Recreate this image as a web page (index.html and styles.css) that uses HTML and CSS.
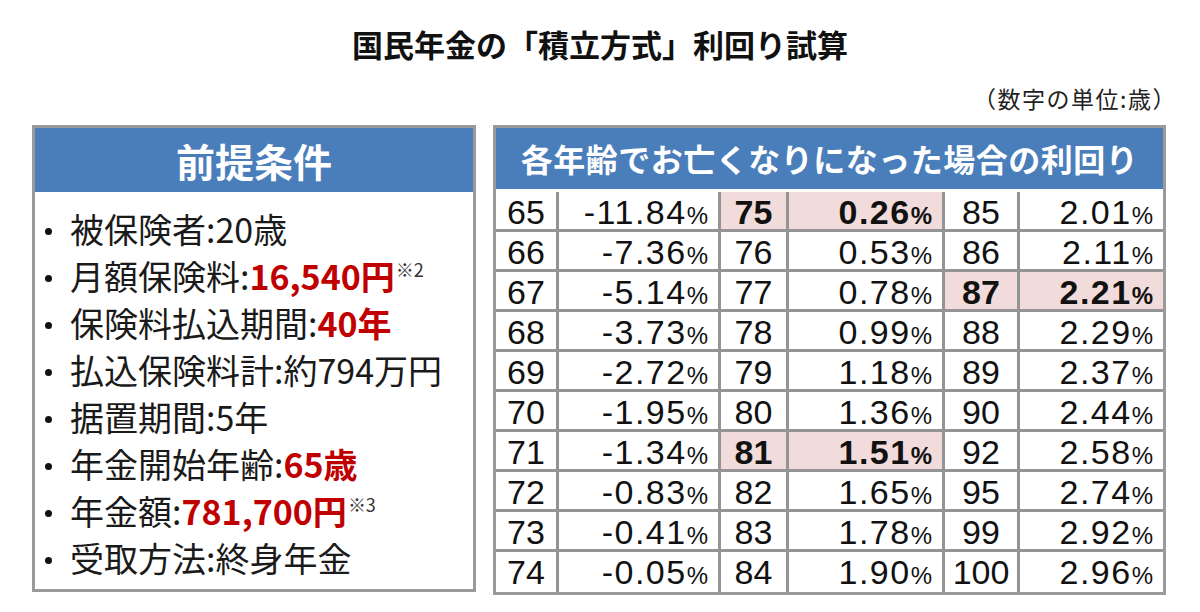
FILE: index.html
```html
<!DOCTYPE html>
<html lang="ja">
<head>
<meta charset="utf-8">
<title>国民年金の「積立方式」利回り試算</title>
<link rel="stylesheet" href="styles.css">
</head>
<body>
<div class="page">
  <h1 class="title">国民年金の「積立方式」利回り試算</h1>
  <div class="unit">（数字の単位:歳）</div>
  <div class="panels">
    <section class="cond">
      <div class="cond-head">前提条件</div>
      <ul class="cond-list">
        <li>被保険者:20歳</li>
        <li>月額保険料:<b class="red">16,540円</b><span class="note">※2</span></li>
        <li>保険料払込期間:<b class="red">40年</b></li>
        <li>払込保険料計:約794万円</li>
        <li>据置期間:5年</li>
        <li>年金開始年齢:<b class="red">65歳</b></li>
        <li>年金額:<b class="red">781,700円</b><span class="note">※3</span></li>
        <li>受取方法:終身年金</li>
      </ul>
    </section>
    <section class="yield">
      <div class="yield-head">各年齢でお亡くなりになった場合の利回り</div>
      <div class="grid">
        <div class="age">65</div><div class="val">-11.84<small>%</small></div><div class="age hl">75</div><div class="val hl">0.26<small>%</small></div><div class="age">85</div><div class="val">2.01<small>%</small></div>
        <div class="age">66</div><div class="val">-7.36<small>%</small></div><div class="age">76</div><div class="val">0.53<small>%</small></div><div class="age">86</div><div class="val">2.11<small>%</small></div>
        <div class="age">67</div><div class="val">-5.14<small>%</small></div><div class="age">77</div><div class="val">0.78<small>%</small></div><div class="age hl">87</div><div class="val hl">2.21<small>%</small></div>
        <div class="age">68</div><div class="val">-3.73<small>%</small></div><div class="age">78</div><div class="val">0.99<small>%</small></div><div class="age">88</div><div class="val">2.29<small>%</small></div>
        <div class="age">69</div><div class="val">-2.72<small>%</small></div><div class="age">79</div><div class="val">1.18<small>%</small></div><div class="age">89</div><div class="val">2.37<small>%</small></div>
        <div class="age">70</div><div class="val">-1.95<small>%</small></div><div class="age">80</div><div class="val">1.36<small>%</small></div><div class="age">90</div><div class="val">2.44<small>%</small></div>
        <div class="age">71</div><div class="val">-1.34<small>%</small></div><div class="age hl">81</div><div class="val hl">1.51<small>%</small></div><div class="age">92</div><div class="val">2.58<small>%</small></div>
        <div class="age">72</div><div class="val">-0.83<small>%</small></div><div class="age">82</div><div class="val">1.65<small>%</small></div><div class="age">95</div><div class="val">2.74<small>%</small></div>
        <div class="age">73</div><div class="val">-0.41<small>%</small></div><div class="age">83</div><div class="val">1.78<small>%</small></div><div class="age">99</div><div class="val">2.92<small>%</small></div>
        <div class="age last">74</div><div class="val last">-0.05<small>%</small></div><div class="age last">84</div><div class="val last">1.90<small>%</small></div><div class="age last">100</div><div class="val last">2.96<small>%</small></div>
      </div>
    </section>
  </div>
</div>
</body>
</html>
```
FILE: styles.css
```css
* { box-sizing: border-box; }
html, body { margin: 0; padding: 0; background: #fff; }
body {
  font-family: "Noto Sans CJK JP", "Noto Sans", sans-serif;
  color: #1a1a1a;
  width: 1200px;
  height: 612px;
  overflow: hidden;
}
.page { padding: 24px 0 0 32px; }

.title {
  margin: 0 32px 0 0;
  text-align: center;
  font-size: 31px;
  line-height: 40px;
  font-weight: 700;
  color: #111;
}
.unit {
  margin: 20px 0 0 0;
  padding-right: 23px;
  text-align: right;
  font-size: 23px;
  line-height: 28px;
  letter-spacing: 1.5px;
  color: #222;
}

.panels {
  margin-top: 13px;
  display: flex;
  gap: 17px;
  align-items: flex-start;
}

/* left panel */
.cond {
  width: 444px;
  border: 3px solid #9a9a9a;
}
.cond-head {
  height: 64px;
  line-height: 64px;
  background: #4a7ebb;
  color: #fff;
  text-align: center;
  font-size: 39px;
  font-weight: 700;
}
.cond-list {
  list-style: none;
  margin: 0;
  padding: 13px 0 8px 10px;
}
.cond-list li {
  display: flex;
  align-items: baseline;
  font-size: 34px;
  line-height: 47px;
  white-space: nowrap;
}
.cond-list li::before {
  content: "";
  flex: none;
  width: 7px;
  height: 7px;
  border-radius: 50%;
  background: #111;
  margin-right: 18px;
  align-self: center;
  position: relative;
  top: 3px;
}
.red { color: #c00000; font-weight: 700; }
.note {
  font-size: 18px;
  color: #333;
  align-self: flex-start;
  line-height: 18px;
  margin-top: 8px;
  margin-left: 1px;
}

/* right panel */
.yield {
  width: 673px;
  border: 3px solid #9a9a9a;
}
.yield-head {
  height: 61px;
  line-height: 61px;
  background: #4a7ebb;
  color: #fff;
  text-align: center;
  font-size: 32px;
  font-weight: 700;
  letter-spacing: 0.5px;
}
.grid {
  display: grid;
  grid-template-columns: 63px 162px 68px 156px 75px 143px;
  grid-auto-rows: 40px;
  border-top: 3px solid #fff;
}
.grid > div {
  border-right: 3px solid #949494;
  border-bottom: 3px solid #949494;
  font-family: "Liberation Sans", Arial, sans-serif;
  font-size: 34px;
  line-height: 34px;
  padding-top: 3px;
  white-space: nowrap;
  color: #111;
}
.grid > div:nth-child(6n) { border-right: none; }
.grid > div.last { border-bottom: none; }
.age { text-align: center; }
.val { text-align: right; padding-right: 10px; letter-spacing: 1.5px; }
.val small { font-size: 24px; letter-spacing: 0; }
.hl { background: #f2dcdb; font-weight: 700; }
```
